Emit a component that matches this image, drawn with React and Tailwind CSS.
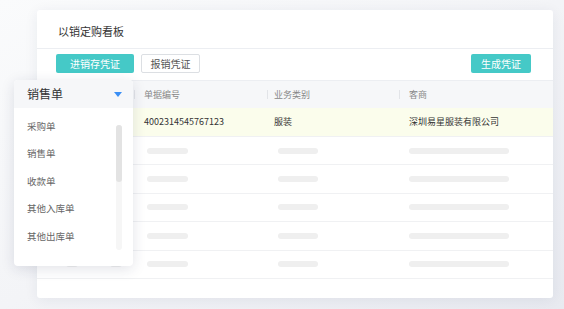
import React from "react";

const placeholderRows = [0, 1, 2, 3, 4];
const menuItems = ["采购单", "销售单", "收款单", "其他入库单", "其他出库单"];

function Bar({ className }) {
    return <div className={`h-[6px] rounded-full bg-[#efefef] ${className}`} />;
}

export default function App() {
    return (
        <div className="relative h-[309px] w-[564px] overflow-hidden bg-linear-to-br from-[#fafbfc] via-[#f3f4f7] to-[#e8eaf0] pt-[10px] font-['Noto_Sans_CJK_SC',sans-serif]">
            <div className="ml-[37px] flex h-[288px] w-[516px] flex-col rounded-[3px] bg-white shadow-[0_2px_14px_rgba(30,40,80,0.07)]">
                <div className="flex h-[39px] shrink-0 items-center border-b border-[#eceef2] pl-[21px] pt-[4px] text-[11px] text-[#333]">
                    以销定购看板
                </div>

                <div className="flex h-[31px] shrink-0 items-start justify-between pl-[19px] pr-[22px] pt-[5px] text-[10px]">
                    <div className="flex gap-[7px]">
                        <button className="flex h-[19px] w-[78px] items-center justify-center rounded-[2px] bg-[#45c9c7] text-white">
                            进销存凭证
                        </button>
                        <button className="flex h-[19px] w-[59px] items-center justify-center rounded-[2px] border border-[#dcdfe3] text-[#555]">
                            报销凭证
                        </button>
                    </div>
                    <button className="flex h-[19px] w-[60px] items-center justify-center rounded-[2px] bg-[#45c9c7] text-white">
                        生成凭证
                    </button>
                </div>

                <div className="grid h-[28px] shrink-0 grid-cols-[97px_133px_132px_1fr] items-center border-t border-[#eceef2] bg-[#f6f7f9] text-[9px] text-[#888]">
                    <div />
                    <div className="flex items-center">
                        <span className="h-[9px] w-px bg-[#e2e4e8]" />
                        <span className="pl-[9px]">单据编号</span>
                    </div>
                    <div className="flex items-center">
                        <span className="h-[9px] w-px bg-[#e2e4e8]" />
                        <span className="pl-[6px]">业务类别</span>
                    </div>
                    <div className="flex items-center">
                        <span className="h-[9px] w-px bg-[#e2e4e8]" />
                        <span className="pl-[9px]">客商</span>
                    </div>
                </div>

                <div className="grid h-[29px] shrink-0 grid-cols-[97px_133px_132px_1fr] items-center border-b border-[#f0f1f3] bg-[#fbfdec] text-[9px] text-[#333]">
                    <div />
                    <div className="pl-[10px]">4002314545767123</div>
                    <div className="pl-[7px]">服装</div>
                    <div className="pl-[10px]">深圳易星服装有限公司</div>
                </div>

                {placeholderRows.map((r) => (
                    <div
                        key={r}
                        className="grid h-[28.4px] shrink-0 grid-cols-[97px_133px_132px_1fr] items-center border-b border-[#f0f1f3]"
                    >
                        <div className="flex gap-[32px] pl-[29px]">
                            <Bar className="w-[12px]" />
                            <Bar className="w-[12px]" />
                        </div>
                        <div className="pl-[13px]">
                            <Bar className="w-[41px]" />
                        </div>
                        <div className="pl-[11px]">
                            <Bar className="w-[40px]" />
                        </div>
                        <div className="pl-[10px]">
                            <Bar className="w-[100px]" />
                        </div>
                    </div>
                ))}
            </div>

            <div className="absolute left-[14px] top-[80px] flex h-[186px] w-[119px] flex-col overflow-hidden rounded-[4px] bg-white shadow-[0_3px_14px_rgba(30,40,80,0.13)]">
                <div className="flex h-[28px] shrink-0 items-center justify-between bg-[#f6f7f9] pl-[13px] pr-[11px] text-[12px] text-[#333]">
                    <span>销售单</span>
                    <svg width="8" height="5" viewBox="0 0 8 5">
                        <path d="M0 0H8L4 5Z" fill="#3b8ff5" />
                    </svg>
                </div>
                <div className="flex flex-1 pt-[4px]">
                    <div className="flex flex-1 flex-col pl-[13px] text-[9.5px] text-[#666]">
                        {menuItems.map((item) => (
                            <div key={item} className="flex h-[27.5px] items-center">
                                {item}
                            </div>
                        ))}
                    </div>
                    <div className="mr-[11px] mt-[13px] h-[125px] w-[6px] rounded-full bg-[#f6f6f6]">
                        <div className="h-[57px] w-full rounded-full bg-[#e3e3e3]" />
                    </div>
                </div>
            </div>
        </div>
    );
}
